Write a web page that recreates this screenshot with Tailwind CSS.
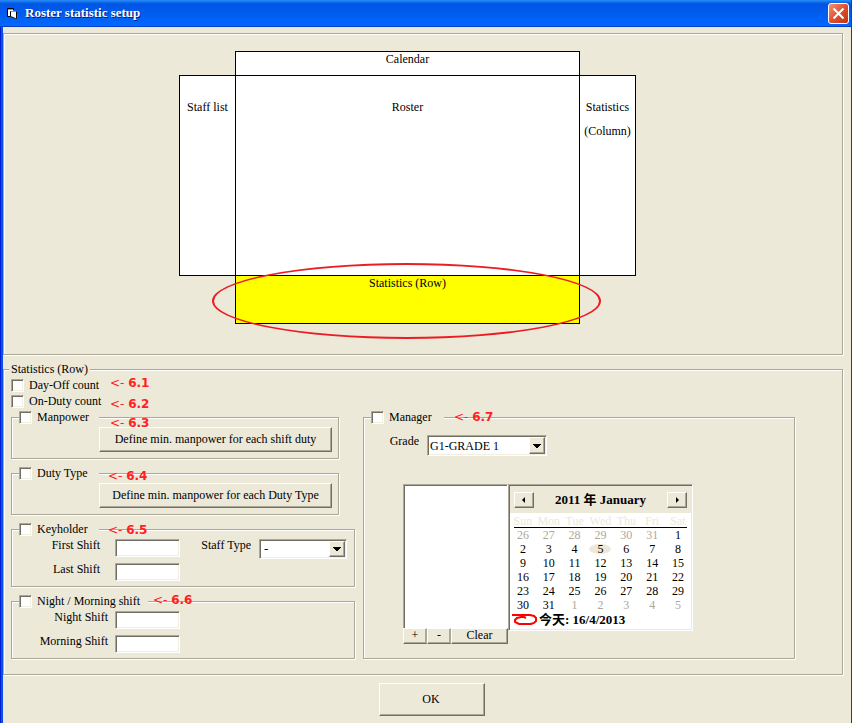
<!DOCTYPE html>
<html lang="en">
<head>
<meta charset="utf-8">
<title>Roster statistic setup</title>
<script src="https://cdn.jsdelivr.net/npm/@tailwindcss/browser@4"></script>
</head>
<body class="min-h-screen flex flex-col bg-[#ece9d8] text-black text-[12px] leading-4 font-['Liberation_Serif','Noto_Sans_CJK_TC',serif] border-r border-[#0f3db4]">

<header class="h-[27px] shrink-0 flex items-center pl-[6px] pr-[2px] bg-linear-to-b from-[#2a8cf8] via-[#0054e3] via-15% to-[#0068ff] border-b border-[#0040c8]">
  <svg class="w-[13px] h-[13px] mr-[6px]" viewBox="0 0 13 13" aria-hidden="true">
    <path d="M1 2h7v2h3v7l-1 1-5-2-4-1z" fill="#fff"/>
    <path d="M1.500 9.500v-8h6v2M1.500 9.500h3M4.500 4.500v5l5 2h1v-7z" fill="none" stroke="#000"/>
    <path d="M2 2.500h5M5 4.500h5" stroke="#18c8d0"/>
    <path d="M11.500 7v4" stroke="#5a6a80"/>
  </svg>
  <h1 class="grow text-white font-bold text-[13px] [text-shadow:1px_1px_0_#0a1c80]">Roster statistic setup</h1>
  <button aria-label="Close" class="size-[21px] rounded-[3px] border border-white bg-linear-to-br from-[#f0907a] via-[#e0502c] to-[#c03410] flex items-center justify-center">
    <svg class="size-[13px]" viewBox="0 0 13 13" aria-hidden="true"><path d="M1.500 1.500l10 10M11.500 1.500l-10 10" stroke="#fff" stroke-width="2"/></svg>
  </button>
</header>

<main class="relative grow pt-[6px] pr-2 pb-[6px] border-l-3 border-[#0a50ec] before:absolute before:-left-[3px] before:inset-y-0 before:w-px before:bg-[#0020d0]">
  <section class="border border-[#aca899] shadow-[1px_1px_0_#fff,inset_1px_1px_0_#fff] pt-[17px] pb-[30px] pl-[175px]">
    <div class="relative w-[457px] text-center">
      <div class="mx-[56px] h-6 bg-white border border-b-0 border-black leading-[14px]">Calendar</div>
      <div class="flex h-[201px] leading-6">
        <div class="w-[56px] pt-[19px] bg-white border border-r-0 border-black">Staff list</div>
        <div class="grow pt-[19px] bg-white border border-black">Roster</div>
        <div class="w-[56px] pt-[19px] bg-white border border-l-0 border-black">Statistics<br>(Column)</div>
      </div>
      <div class="mx-[56px] h-12 bg-[#ffff00] border border-t-0 border-black leading-[14px]">Statistics (Row)</div>
      <div class="absolute left-[33px] top-[212px] w-[389px] h-[76px] rounded-[50%] border-2 border-[#ed1c24]"></div>
    </div>
  </section>

  <fieldset class="mt-[6px] px-[7px] pb-[15px] border border-[#aca899] shadow-[1px_1px_0_#fff,inset_1px_1px_0_#fff]">
    <legend class="-ml-[2px] px-[2px] bg-[#ece9d8]">Statistics (Row)</legend>
    <label class="flex items-center gap-[5px] h-4 w-fit"><input type="checkbox" class="appearance-none size-[13px] bg-white border border-[#aca899] border-r-white border-b-white shadow-[inset_1px_1px_0_#716f64,inset_-1px_-1px_0_#f1efe2] checked:bg-[#716f64]">Day-Off count</label>
    <label class="flex items-center gap-[5px] h-4 w-fit"><input type="checkbox" class="appearance-none size-[13px] bg-white border border-[#aca899] border-r-white border-b-white shadow-[inset_1px_1px_0_#716f64,inset_-1px_-1px_0_#f1efe2] checked:bg-[#716f64]">On-Duty count</label>

    <div class="flex gap-2">
      <div class="w-[344px] flex flex-col gap-[6px]">
        <fieldset class="w-[328px] pl-[7px] pr-[6px] pb-[6px] border border-[#aca899] shadow-[1px_1px_0_#fff,inset_1px_1px_0_#fff]">
          <legend class="w-[80px] bg-[#ece9d8]"><label class="flex items-center gap-[5px]"><input type="checkbox" class="appearance-none size-[13px] bg-white border border-[#aca899] border-r-white border-b-white shadow-[inset_1px_1px_0_#716f64,inset_-1px_-1px_0_#f1efe2] checked:bg-[#716f64]">Manpower</label></legend>
          <button class="block mt-[2px] ml-20 pb-[2px] w-[233px] h-[25px] border border-white border-r-[#716f64] border-b-[#716f64] shadow-[inset_-1px_-1px_0_#aca899]">Define min. manpower for each shift duty</button>
        </fieldset>
        <fieldset class="w-[328px] pl-[7px] pr-[6px] pb-[6px] border border-[#aca899] shadow-[1px_1px_0_#fff,inset_1px_1px_0_#fff]">
          <legend class="w-[80px] bg-[#ece9d8]"><label class="flex items-center gap-[5px]"><input type="checkbox" class="appearance-none size-[13px] bg-white border border-[#aca899] border-r-white border-b-white shadow-[inset_1px_1px_0_#716f64,inset_-1px_-1px_0_#f1efe2] checked:bg-[#716f64]">Duty Type</label></legend>
          <button class="block mt-[2px] ml-20 pb-[2px] w-[233px] h-[25px] border border-white border-r-[#716f64] border-b-[#716f64] shadow-[inset_-1px_-1px_0_#aca899]">Define min. manpower for each Duty Type</button>
        </fieldset>
        <fieldset class="pl-[7px] pr-[6px] pb-[5px] border border-[#aca899] shadow-[1px_1px_0_#fff,inset_1px_1px_0_#fff]">
          <legend class="w-[80px] bg-[#ece9d8]"><label class="flex items-center gap-[5px]"><input type="checkbox" class="appearance-none size-[13px] bg-white border border-[#aca899] border-r-white border-b-white shadow-[inset_1px_1px_0_#716f64,inset_-1px_-1px_0_#f1efe2] checked:bg-[#716f64]">Keyholder</label></legend>
          <div class="flex items-start pt-[2px]">
            <div class="grid grid-cols-[81px_65px] gap-x-[15px] gap-y-[6px] leading-3 text-right">
              <label for="first">First Shift</label>
              <input id="first" type="text" class="h-[18px] px-[3px] bg-white border border-[#aca899] border-r-white border-b-white shadow-[inset_1px_1px_0_#716f64,inset_-1px_-1px_0_#f1efe2]">
              <label for="last">Last Shift</label>
              <input id="last" type="text" class="h-[18px] px-[3px] bg-white border border-[#aca899] border-r-white border-b-white shadow-[inset_1px_1px_0_#716f64,inset_-1px_-1px_0_#f1efe2]">
            </div>
            <label for="stype" class="w-[71px] mr-2 text-right leading-3">Staff Type</label>
            <span class="relative w-[88px] h-[20px]">
              <select id="stype" class="appearance-none block w-full h-full pl-[4px] text-[13px] leading-4 bg-white border border-[#aca899] border-r-white border-b-white shadow-[inset_1px_1px_0_#716f64,inset_-1px_-1px_0_#f1efe2]"><option>-</option></select>
              <svg class="absolute right-[2px] top-[2px] w-[16px] h-[16px] bg-[#ece9d8] border border-white border-r-[#716f64] border-b-[#716f64] shadow-[inset_-1px_-1px_0_#aca899] pointer-events-none" viewBox="0 0 14 14" shape-rendering="crispEdges" aria-hidden="true"><path d="M3 5h8v1h-1v1H9v1H8v1H6V8H5V7H4V6H3z"/></svg>
            </span>
          </div>
        </fieldset>
        <fieldset class="px-[7px] pb-[5px] border border-[#aca899] shadow-[1px_1px_0_#fff,inset_1px_1px_0_#fff]">
          <legend class="w-[129px] bg-[#ece9d8]"><label class="flex items-center gap-[5px]"><input type="checkbox" class="appearance-none size-[13px] bg-white border border-[#aca899] border-r-white border-b-white shadow-[inset_1px_1px_0_#716f64,inset_-1px_-1px_0_#f1efe2] checked:bg-[#716f64]">Night / Morning shift</label></legend>
          <div class="grid grid-cols-[89px_65px] gap-x-[7px] gap-y-[6px] pt-[2px] leading-3 text-right">
            <label for="night">Night Shift</label>
            <input id="night" type="text" class="h-[18px] px-[3px] bg-white border border-[#aca899] border-r-white border-b-white shadow-[inset_1px_1px_0_#716f64,inset_-1px_-1px_0_#f1efe2]">
            <label for="morning">Morning Shift</label>
            <input id="morning" type="text" class="h-[18px] px-[3px] bg-white border border-[#aca899] border-r-white border-b-white shadow-[inset_1px_1px_0_#716f64,inset_-1px_-1px_0_#f1efe2]">
          </div>
        </fieldset>
      </div>

      <fieldset class="w-[432px] px-[7px] border border-[#aca899] shadow-[1px_1px_0_#fff,inset_1px_1px_0_#fff]">
        <legend class="w-[73px] bg-[#ece9d8]"><label class="flex items-center gap-[5px]"><input type="checkbox" class="appearance-none size-[13px] bg-white border border-[#aca899] border-r-white border-b-white shadow-[inset_1px_1px_0_#716f64,inset_-1px_-1px_0_#f1efe2] checked:bg-[#716f64]">Manager</label></legend>
        <div class="flex items-start pt-[10px]">
          <label for="grade" class="w-[48px] mr-2 text-right leading-3">Grade</label>
          <span class="relative w-[120px] h-[21px]">
            <select id="grade" class="appearance-none block w-full h-full pl-[2px] text-[12px] leading-4 bg-white border border-[#aca899] border-r-white border-b-white shadow-[inset_1px_1px_0_#716f64,inset_-1px_-1px_0_#f1efe2]"><option>G1-GRADE 1</option></select>
            <svg class="absolute right-[2px] top-[2px] w-[16px] h-[17px] bg-[#ece9d8] border border-white border-r-[#716f64] border-b-[#716f64] shadow-[inset_-1px_-1px_0_#aca899] pointer-events-none" viewBox="0 0 14 15" shape-rendering="crispEdges" aria-hidden="true"><path d="M3 6h8v1h-1v1H9v1H8v1H6V9H5V8H4V7H3z"/></svg>
          </span>
        </div>
        <div class="flex items-start mt-7 ml-8">
          <div class="w-[105px]">
            <div role="listbox" aria-label="Dates" class="h-[144px] bg-white border border-[#aca899] border-r-white border-b-0 shadow-[inset_1px_1px_0_#716f64]"></div>
            <div class="flex h-4 leading-3">
              <button class="w-6 pb-[2px] border border-white border-r-[#aca899] border-b-[#716f64] shadow-[inset_-1px_-1px_0_#aca899]">+</button>
              <button class="w-6 pb-[2px] border border-white border-r-[#aca899] border-b-[#716f64] shadow-[inset_-1px_-1px_0_#aca899]">-</button>
              <button class="grow pb-[2px] border border-white border-r-[#716f64] border-b-[#716f64] shadow-[inset_-1px_-1px_0_#aca899]">Clear</button>
            </div>
          </div>
          <div class="w-[185px] h-[147px] bg-white border border-[#aca899] border-r-white border-b-white shadow-[inset_1px_1px_0_#716f64,inset_-1px_-1px_0_#ece9d8] p-px">
            <div class="h-[27px] flex items-center justify-between px-[4px] bg-[#ece9d8] font-bold text-[13px]">
              <button aria-label="Previous month" class="w-[20px] h-[16px] border border-white border-r-[#716f64] border-b-[#716f64] shadow-[inset_-1px_-1px_0_#aca899]"><svg class="block w-[18px] h-[14px]" viewBox="0 0 18 14" aria-hidden="true"><path d="M10 4v6L7 7z"/></svg></button>
              <span>2011 年 January</span>
              <button aria-label="Next month" class="w-[20px] h-[16px] border border-white border-r-[#716f64] border-b-[#716f64] shadow-[inset_-1px_-1px_0_#aca899]"><svg class="block w-[18px] h-[14px]" viewBox="0 0 18 14" aria-hidden="true"><path d="M8 4v6l3-3z"/></svg></button>
            </div>
            <table class="w-full table-fixed text-center leading-[14px] [&_td]:p-0 [&_th]:p-0">
              <thead class="text-[#ece9d8]"><tr class="h-[15px] bg-linear-to-r from-black to-black bg-[length:174px_1px] bg-no-repeat bg-bottom"><th class="font-normal">Sun</th><th class="font-normal">Mon</th><th class="font-normal">Tue</th><th class="font-normal">Wed</th><th class="font-normal">Thu</th><th class="font-normal">Fri</th><th class="font-normal">Sat</th></tr></thead>
              <tbody>
                <tr><td class="text-[#aca899]">26</td><td class="text-[#aca899]">27</td><td class="text-[#aca899]">28</td><td class="text-[#aca899]">29</td><td class="text-[#aca899]">30</td><td class="text-[#aca899]">31</td><td>1</td></tr>
                <tr><td>2</td><td>3</td><td>4</td><td><span class="block mx-auto w-[22px] h-[10px] leading-[10px] rounded-[50%] bg-[#ece9d8]">5</span></td><td>6</td><td>7</td><td>8</td></tr>
                <tr><td>9</td><td>10</td><td>11</td><td>12</td><td>13</td><td>14</td><td>15</td></tr>
                <tr><td>16</td><td>17</td><td>18</td><td>19</td><td>20</td><td>21</td><td>22</td></tr>
                <tr><td>23</td><td>24</td><td>25</td><td>26</td><td>27</td><td>28</td><td>29</td></tr>
                <tr><td>30</td><td>31</td><td class="text-[#aca899]">1</td><td class="text-[#aca899]">2</td><td class="text-[#aca899]">3</td><td class="text-[#aca899]">4</td><td class="text-[#aca899]">5</td></tr>
              </tbody>
            </table>
            <div class="flex items-center h-[15px] pl-[2px] font-bold text-[13px] leading-[15px]">
              <svg class="w-[26px] h-[13px] mr-px" viewBox="0 0 26 13" fill="none" stroke="#f00" stroke-width="2" aria-hidden="true"><path d="M0 2h18l4 1 2 2v3l-2 2-3 1H7L3 9V7l2-2 4-1h3l2 1"/></svg>
              今天: 16/4/2013
            </div>
          </div>
        </div>
      </fieldset>
    </div>
  </fieldset>

  <button class="block mt-[8px] ml-[376px] pb-[2px] pr-[2px] w-[106px] h-[33px] border border-white border-r-[#716f64] border-b-[#716f64] shadow-[inset_-1px_-1px_0_#aca899]">OK</button>

  <!-- section number annotations over the form -->
  <div class="absolute inset-0 pointer-events-none text-[#ff2020] font-['DejaVu_Sans',sans-serif] text-[12px] leading-4">
    <span class="absolute left-[107px] top-[348px]">&lt;- <b>6.1</b></span>
    <span class="absolute left-[107px] top-[369px]">&lt;- <b>6.2</b></span>
    <span class="absolute left-[107px] top-[388px]">&lt;- <b>6.3</b></span>
    <span class="absolute left-[105px] top-[441px]">&lt;- <b>6.4</b></span>
    <span class="absolute left-[105px] top-[495px]">&lt;- <b>6.5</b></span>
    <span class="absolute left-[150px] top-[565px]">&lt;- <b>6.6</b></span>
    <span class="absolute left-[451px] top-[382px]">&lt;- <b>6.7</b></span>
  </div>
</main>
</body>
</html>
